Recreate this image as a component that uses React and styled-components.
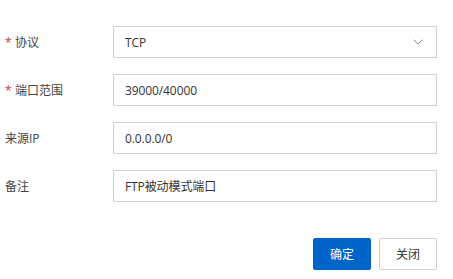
import React from 'react'
import styled, { createGlobalStyle } from 'styled-components'

const Global = createGlobalStyle`
  body {
    margin: 0;
    background: #ffffff;
    font-family: "Open Sans", "Noto Sans CJK SC", sans-serif;
    font-size: 12px;
    color: #333;
  }
`

const Form = styled.div`
  width: 453px;
  padding: 26px 16px 0 0;
  box-sizing: border-box;
  display: flex;
  flex-direction: column;
  gap: 16px;
`

const Row = styled.div`
  display: flex;
  align-items: center;
  height: 32px;
`

const Label = styled.div`
  width: 113px;
  flex-shrink: 0;
  display: flex;
  align-items: center;
  padding-left: 5px;
  box-sizing: border-box;
  color: #444;
`

const Star = styled.span`
  color: #d93026;
  width: 10px;
  font-size: 12px;
  line-height: 1;
  margin-top: 2px;
`

const Field = styled.div`
  flex: 1;
  height: 32px;
  box-sizing: border-box;
  border: 1px solid #cfcfcf;
  display: flex;
  align-items: center;
  justify-content: space-between;
  padding: 0 13px 0 11px;
  color: #333;
  letter-spacing: -0.1px;
`

const Chevron = styled.svg`
  width: 10px;
  height: 6px;
`

const Actions = styled.div`
  display: flex;
  justify-content: flex-end;
  gap: 8px;
  margin-top: 20px;
`

const Button = styled.button`
  width: 58px;
  height: 32px;
  box-sizing: border-box;
  font-family: inherit;
  font-size: 12px;
  border-radius: 2px;
  cursor: pointer;
  border: 1px solid ${p => (p.$primary ? '#0064c8' : '#cfcfcf')};
  background: ${p => (p.$primary ? '#0064c8' : '#ffffff')};
  color: ${p => (p.$primary ? '#ffffff' : '#333')};
`

const rows = [
  { label: '协议', required: true, value: 'TCP', select: true },
  { label: '端口范围', required: true, value: '39000/40000' },
  { label: '来源IP', value: '0.0.0.0/0' },
  { label: '备注', value: 'FTP被动模式端口' },
]

export default function App() {
  return (
    <>
      <Global />
      <Form>
        {rows.map(r => (
          <Row key={r.label}>
            <Label>
              {r.required && <Star>*</Star>}
              {r.label}
            </Label>
            <Field>
              <span>{r.value}</span>
              {r.select && (
                <Chevron viewBox="0 0 10 6">
                  <path d="M0.7 0.7 L5 5.2 L9.3 0.7" fill="none" stroke="#888" strokeWidth="1" />
                </Chevron>
              )}
            </Field>
          </Row>
        ))}
        <Actions>
          <Button $primary>确定</Button>
          <Button>关闭</Button>
        </Actions>
      </Form>
    </>
  )
}
